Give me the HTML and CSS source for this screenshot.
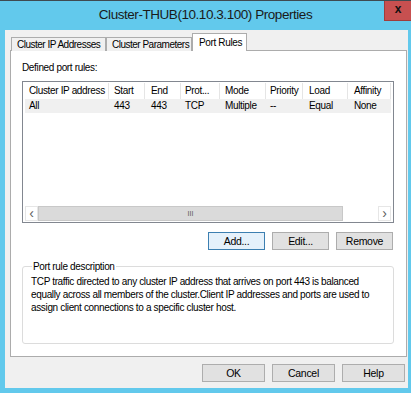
FILE: index.html
```html
<!DOCTYPE html>
<html>
<head>
    <meta charset="UTF-8" />
    <title>Cluster-THUB(10.10.3.100) Properties</title>
    <link rel="stylesheet" href="styles.css">
</head>
<body>
    <div class="window">
        <div class="titlebar">
            <div class="title">Cluster-THUB(10.10.3.100) Properties</div>
            <div class="close-btn">x</div>
        </div>

        <div class="client">
            <div class="tabs">
                <div class="tab tab-ip">Cluster IP Addresses</div>
                <div class="tab tab-params">Cluster Parameters</div>
                <div class="tab tab-rules selected">Port Rules</div>
            </div>

            <div class="tab-panel">
                <div class="section-label">Defined port rules:</div>

                <div class="listview">
                    <div class="lv-row lv-header">
                        <span class="c-ip">Cluster IP address</span>
                        <span class="c-start">Start</span>
                        <span class="c-end">End</span>
                        <span class="c-prot">Prot...</span>
                        <span class="c-mode">Mode</span>
                        <span class="c-prio">Priority</span>
                        <span class="c-load">Load</span>
                        <span class="c-aff">Affinity</span>
                    </div>
                    <div class="lv-row lv-item">
                        <span class="c-ip">All</span>
                        <span class="c-start">443</span>
                        <span class="c-end">443</span>
                        <span class="c-prot">TCP</span>
                        <span class="c-mode">Multiple</span>
                        <span class="c-prio">--</span>
                        <span class="c-load">Equal</span>
                        <span class="c-aff">None</span>
                    </div>
                    <div class="lv-body"></div>
                    <div class="hscroll">
                        <div class="sb-arrow">&lsaquo;</div>
                        <div class="sb-thumb">III</div>
                        <div class="sb-track"></div>
                        <div class="sb-arrow">&rsaquo;</div>
                    </div>
                </div>

                <div class="list-buttons">
                    <button class="btn default">Add...</button>
                    <button class="btn">Edit...</button>
                    <button class="btn">Remove</button>
                </div>

                <fieldset class="groupbox">
                    <legend>Port rule description</legend>
                    <p class="desc">TCP traffic directed to any cluster IP address that arrives on port 443 is balanced<br>equally across all members of the cluster.Client IP addresses and ports are used to<br>assign client connections to a specific cluster host.</p>
                </fieldset>
            </div>

            <div class="dialog-buttons">
                <button class="btn wide">OK</button>
                <button class="btn wide">Cancel</button>
                <button class="btn wide">Help</button>
            </div>
        </div>
    </div>
</body>
</html>
```

FILE: styles.css
```css
body { margin: 0; font-family: "Liberation Sans", Arial, sans-serif; font-size: 10px; letter-spacing: -0.35px; color: #000; }

.window {
    width: 411px;
    height: 393px;
    box-sizing: border-box;
    background: #62c9ec;
    border-top: 1px solid #3f4a50;
    display: flex;
    flex-direction: column;
}

.titlebar {
    height: 29px;
    display: flex;
    align-items: flex-start;
}
.title {
    flex-grow: 1;
    padding-left: 27px;
    text-align: center;
    font-size: 13.5px;
    letter-spacing: -0.45px;
    line-height: 27px;
    color: #1a1a1a;
}
.close-btn {
    width: 26px;
    height: 19px;
    background: #c75050;
    border-left: 1px solid #a03c3c;
    border-bottom: 1px solid #a03c3c;
    color: #111;
    font-weight: bold;
    font-size: 12px;
    letter-spacing: 0;
    line-height: 16px;
    text-align: center;
}

.client {
    flex-grow: 1;
    margin: 0 3px 5px 5px;
    background: #f0f0f0;
    padding: 3px 1px 0 5px;
    display: flex;
    flex-direction: column;
}

/* tab strip */
.tabs {
    display: flex;
    align-items: flex-end;
    padding-left: 1px;
    margin-bottom: -1px;
    position: relative;
    z-index: 1;
}
.tab {
    box-sizing: border-box;
    height: 14px;
    line-height: 13px;
    padding-left: 5px;
    border: 1px solid #acacac;
    border-bottom: none;
    background: #f0f0f0;
    white-space: nowrap;
    letter-spacing: -0.5px;
}
.tab-ip { width: 95px; }
.tab-params { width: 86px; }
.tab.selected {
    width: 55px;
    height: 18px;
    line-height: 17px;
    background: #fff;
    padding-left: 6px;
    letter-spacing: -0.35px;
}

.tab-panel {
    height: 307px;
    box-sizing: border-box;
    background: #fff;
    border: 1px solid #acacac;
    padding: 11px 12px 0 11px;
}

.section-label { height: 19px; line-height: 12px; }

/* list view */
.listview {
    height: 142px;
    box-sizing: border-box;
    border: 1px solid #828790;
    padding: 1px 2px 1px 2px;
    display: flex;
    flex-direction: column;
}
.lv-row { display: flex; height: 15px; line-height: 15px; }
.lv-header span { border-right: 1px solid #e5e5e5; }
.lv-header { height: 16px; }
.lv-item { background: #f0f0f0; height: 14px; line-height: 14px; }
.lv-row span { box-sizing: border-box; padding-left: 4px; white-space: nowrap; overflow: hidden; }
.c-ip { width: 84px; }
.c-start { width: 36px; padding-left: 5px !important; }
.c-end { width: 36px; padding-left: 6px !important; }
.c-prot { width: 39px; }
.c-mode { width: 46px; padding-left: 5px !important; }
.c-prio { width: 37px; }
.c-load { width: 45px; padding-left: 6px !important; }
.c-aff { width: 43px; padding-left: 6px !important; }
.lv-body { flex-grow: 1; }

.hscroll { display: flex; height: 15px; }
.sb-arrow {
    width: 13px;
    background: #fff;
    color: #606060;
    font-size: 14px;
    line-height: 13px;
    text-align: center;
    border: 1px solid #e6e6e6;
    box-sizing: border-box;
}
.sb-thumb {
    width: 305px;
    background: #dadada;
    border: 1px solid #c8c8c8;
    box-sizing: border-box;
    text-align: center;
    font-size: 7px;
    letter-spacing: 0;
    line-height: 13px;
    color: #555;
}
.sb-track { flex-grow: 1; background: #fff; }

/* buttons */
.list-buttons {
    display: flex;
    justify-content: flex-end;
    gap: 7px;
    padding: 9px 1px 0 0;
    height: 18px;
}
.btn {
    margin: 0;
    width: 57px;
    height: 18px;
    padding: 0;
    font-family: inherit;
    font-size: 10.5px;
    letter-spacing: -0.3px;
    color: #000;
    background: #e1e1e1;
    border: 1px solid #adadad;
}
.btn.default { border-color: #3c7fb1; background: #e5f1fb; }
.btn.wide { width: 63px; }

.groupbox {
    margin: 11px 0 0 0;
    height: 83px;
    box-sizing: border-box;
    border: 1px solid #dcdcdc;
    border-radius: 3px;
    padding: 0 8px;
}
.groupbox legend { padding: 0 1px; margin-left: 1px; line-height: 11px; }
.desc { margin: 3px 0 0 0; line-height: 13px; }

.dialog-buttons {
    display: flex;
    justify-content: flex-end;
    gap: 7px;
    padding: 7px 2px 0 0;
}
```
